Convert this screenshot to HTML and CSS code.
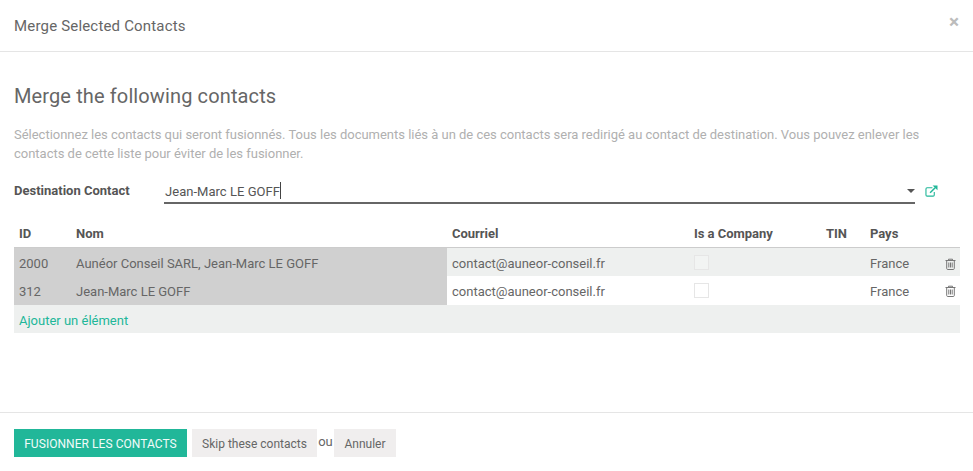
FILE: index.html
```html
<!DOCTYPE html>
<html lang="fr">
<head>
<meta charset="utf-8">
<title>Merge Selected Contacts</title>
<link rel="stylesheet" href="styles.css">
</head>
<body>
<div class="dialog">
  <header class="head">
    <h4 class="title">Merge Selected Contacts</h4>
    <span class="close">×</span>
  </header>
  <main class="body">
    <h2 class="heading">Merge the following contacts</h2>
    <p class="help">Sélectionnez les contacts qui seront fusionnés. Tous les documents liés à un de ces contacts sera redirigé au contact de destination. Vous pouvez enlever les contacts de cette liste pour éviter de les fusionner.</p>
    <div class="field">
      <label class="label">Destination Contact</label>
      <div class="input"><span class="value">Jean-Marc LE GOFF</span><span class="caret"></span><span class="arrow"></span></div>
      <svg class="ext" width="13" height="12" viewBox="0 0 14 13"><path d="M8 3H2.200C1.500 3 1 3.500 1 4.200v6.600c0 .7.5 1.200 1.200 1.200h6.600c.7 0 1.200-.5 1.200-1.200V7.500" fill="none" stroke="#21b799" stroke-width="1.200"/><path d="M5.500 8.500 11 3" fill="none" stroke="#21b799" stroke-width="1.600"/><path d="M8.200 0.500H13.500V5.800Z" fill="#21b799"/></svg>
    </div>
    <table class="grid">
      <colgroup>
        <col class="c-id"><col class="c-nom"><col class="c-mail"><col class="c-co"><col class="c-tin"><col class="c-pays"><col class="c-del">
      </colgroup>
      <thead>
        <tr><th>ID</th><th>Nom</th><th>Courriel</th><th>Is a Company</th><th>TIN</th><th>Pays</th><th></th></tr>
      </thead>
      <tbody>
        <tr class="odd first">
          <td class="ro">2000</td><td class="ro">Aunéor Conseil SARL, Jean-Marc LE GOFF</td><td>contact@auneor-conseil.fr</td>
          <td class="cell-check"><span class="check"></span></td><td></td><td>France</td>
          <td class="del"><svg width="11" height="12" viewBox="0 0 11 12"><path d="M3.500 2.500V1.200h4v1.300M.5 2.500h10M1.700 2.500v8c0 .6.4 1 1 1h5.600c.6 0 1-.4 1-1v-8M3.800 4.500v5M5.500 4.500v5M7.200 4.500v5" fill="none" stroke="#777" stroke-width="1"/></svg></td>
        </tr>
        <tr>
          <td class="ro">312</td><td class="ro">Jean-Marc LE GOFF</td><td>contact@auneor-conseil.fr</td>
          <td class="cell-check"><span class="check"></span></td><td></td><td>France</td>
          <td class="del"><svg width="11" height="12" viewBox="0 0 11 12"><path d="M3.500 2.500V1.200h4v1.300M.5 2.500h10M1.700 2.500v8c0 .6.4 1 1 1h5.600c.6 0 1-.4 1-1v-8M3.800 4.500v5M5.500 4.500v5M7.200 4.500v5" fill="none" stroke="#777" stroke-width="1"/></svg></td>
        </tr>
        <tr class="odd add"><td colspan="7"><a class="link">Ajouter un élément</a></td></tr>
      </tbody>
    </table>
  </main>
  <footer class="foot">
    <button class="btn primary">FUSIONNER LES CONTACTS</button>
    <button class="btn skip">Skip these contacts</button>
    <span class="or">ou</span>
    <button class="btn cancel">Annuler</button>
  </footer>
</div>
</body>
</html>
```
FILE: styles.css
```css
* { box-sizing: border-box; }
html, body { margin: 0; height: 100%; background: #fff; }
body { font-family: Roboto, "Noto Sans", sans-serif; font-size: 13px; color: #666; overflow: hidden; }
.dialog { display: flex; flex-direction: column; height: 471px; }
.head { height: 52px; flex: none; display: flex; align-items: center; justify-content: space-between; padding: 0 14px 0 14px; border-bottom: 1px solid #e5e5e5; }
.title { margin: 0; font-size: 15px; font-weight: 400; letter-spacing: .18px; color: #666; }
.close { font-size: 19px; font-weight: 700; line-height: 1; color: #bcbcbc; margin-top: -8px; }
.body { flex: 1; padding: 0 13px 0 14px; }
.heading { margin: 31px 0 0; font-size: 20px; line-height: 26px; font-weight: 400; letter-spacing: .12px; color: #666; }
.help { margin: 16px 0 0; font-size: 13px; line-height: 19px; letter-spacing: -.015px; color: #b0b0b0; }
.field { display: flex; align-items: flex-start; height: 28px; margin-top: 18px; }
.label { width: 150px; font-weight: 700; line-height: 20px; color: #555; }
.input { position: relative; width: 751px; height: 23px; border-bottom: 2px solid #666; line-height: 20px; padding: 1px 0 0 1px; color: #555; }
.value { letter-spacing: .03px; }
.caret { display: inline-block; width: 1px; height: 17px; background: #444; vertical-align: -3px; }
.arrow { position: absolute; right: 0; top: 8px; border: 4px solid transparent; border-top-color: #555; border-bottom: 0; }
.ext { margin: 4px 0 0 10px; }
.grid { width: 946px; table-layout: fixed; border-collapse: collapse; margin-top: 9px; }
.c-id { width: 57px; } .c-nom { width: 376px; } .c-mail { width: 242px; } .c-co { width: 132px; } .c-tin { width: 44px; } .c-pays { width: 70px; } .c-del { width: 25px; }
th { height: 29px; padding: 2px 5px 0; text-align: left; font-weight: 700; color: #555; border-bottom: 1px solid #ccc; letter-spacing: -.03px; }
td { height: 29px; padding: 2px 5px 0; color: #666; }
.first td { padding-top: 4px; }
.odd td { background: #eef0ef; }
td.ro, .odd td.ro { background: #d0d0d0; }
td.cell-check { padding-top: 0; }
.first td.cell-check { padding-top: 2px; }
.check { display: block; width: 15px; height: 15px; border: 1px solid #e6e6e6; background: #f2f4f3; }
tr:not(.odd) .check { background: #fff; }
td.del { padding: 1px 0 0 10px; }
.first td.del { padding: 4px 0 0 10px; }
.del svg { display: block; }
.add td { height: 28px; }
.link { color: #21b799; }
.foot { height: 59px; flex: none; display: flex; align-items: flex-start; padding: 16px 14px 0; border-top: 1px solid #e5e5e5; }
.btn { height: 28px; border: 0; padding: 1px 0 0; font: 400 12px Roboto, sans-serif; cursor: pointer; }
.primary { width: 173px; background: #21b799; color: #f2fbf9; letter-spacing: .05px; }
.skip { margin-left: 5px; width: 125px; background: #f0eeee; color: #666; }
.or { line-height: 26px; width: 17px; text-align: center; color: #666; }
.cancel { width: 62px; background: #f0eeee; color: #666; }
```
